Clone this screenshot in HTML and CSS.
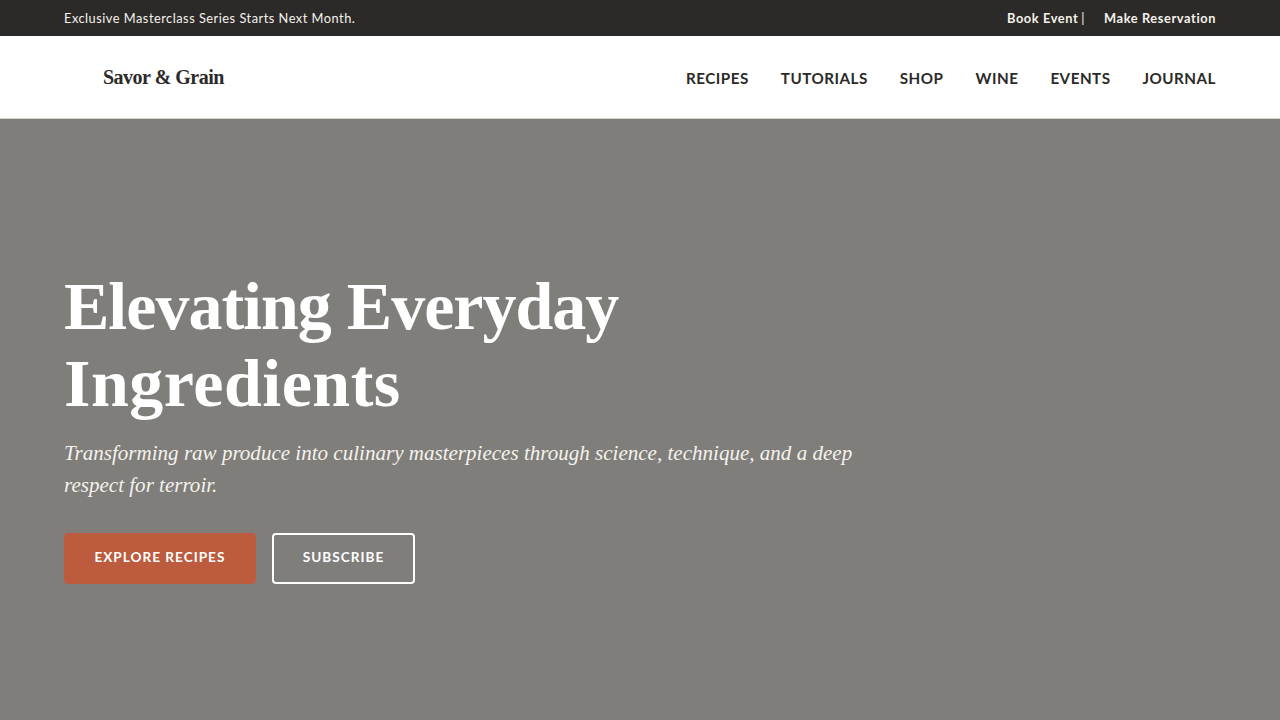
FILE: index.html
```html
<!DOCTYPE html>
<html lang="en">
<head>
<meta charset="utf-8">
<title>Savor &amp; Grain</title>
<link rel="stylesheet" href="styles.css">
</head>
<body>
<div class="topbar">
  <span class="topbar-note">Exclusive Masterclass Series Starts Next Month.</span>
  <div class="topbar-links"><a class="topbar-link">Book Event</a><span class="topbar-sep">|</span><a class="topbar-link">Make Reservation</a></div>
</div>
<header class="header">
  <div class="logo">Savor &amp; Grain</div>
  <nav class="nav">
    <a class="nav-link">RECIPES</a>
    <a class="nav-link">TUTORIALS</a>
    <a class="nav-link">SHOP</a>
    <a class="nav-link">WINE</a>
    <a class="nav-link">EVENTS</a>
    <a class="nav-link">JOURNAL</a>
  </nav>
</header>
<main class="hero">
  <h1 class="hero-title">Elevating Everyday <span class="hero-title-second">Ingredients</span></h1>
  <p class="hero-sub">Transforming raw produce into culinary masterpieces through science, technique, and a deep respect for terroir.</p>
  <div class="hero-actions">
    <a class="btn btn-primary">EXPLORE RECIPES</a>
    <a class="btn btn-outline">SUBSCRIBE</a>
  </div>
</main>
</body>
</html>
```
FILE: styles.css
```css
* { box-sizing: border-box; }
html, body { margin: 0; height: 100%; }
body { font-family: "Lato", sans-serif; background: #7f7e7b; overflow: hidden; }
.topbar { height: 36px; background: #2c2a28; color: #f5f2ec; display: flex; justify-content: space-between; align-items: center; padding: 0 64px; font-size: 12.8px; letter-spacing: 0.5px; }
.topbar-links { display: flex; align-items: center; }
.topbar-link { font-weight: 700; letter-spacing: 0.6px; }
.topbar-sep { margin: 0 19px 0 3px; }
.header { height: 83px; background: #fff; border-bottom: 1px solid #d8d4cc; display: flex; justify-content: space-between; align-items: center; padding: 0 64px 0 103px; }
.logo { font-family: "Liberation Serif", serif; font-weight: 700; font-size: 20px; letter-spacing: -0.5px; color: #2c2a28; }
.nav { display: flex; gap: 32px; padding-top: 2px; }
.nav-link { font-size: 15.2px; font-weight: 700; letter-spacing: 0.5px; color: #2c2a28; }
.hero { height: 601px; padding: 149.4px 64px 0; color: #fff; }
.hero-title { font-family: "Liberation Serif", serif; font-weight: 700; font-size: 68px; letter-spacing: -1px; line-height: 76.8px; margin: 0 0 15px; max-width: 800px; }
.hero-title-second { letter-spacing: 0.5px; }
.hero-sub { font-family: "Liberation Serif", serif; font-style: italic; font-size: 21.05px; line-height: 32px; margin: 0 0 32px; max-width: 800px; color: #f5f2ec; }
.hero-actions { display: flex; gap: 16px; }
.btn { display: block; height: 51px; line-height: 45px; padding: 0 28.4px; font-size: 13.6px; font-weight: 700; letter-spacing: 1px; border: 2px solid transparent; border-radius: 4px; color: #fff; }
.btn-primary { background: #bd5b3e; border-color: #bd5b3e; }
.btn-outline { border-color: #fff; padding: 0 29px; }
```
